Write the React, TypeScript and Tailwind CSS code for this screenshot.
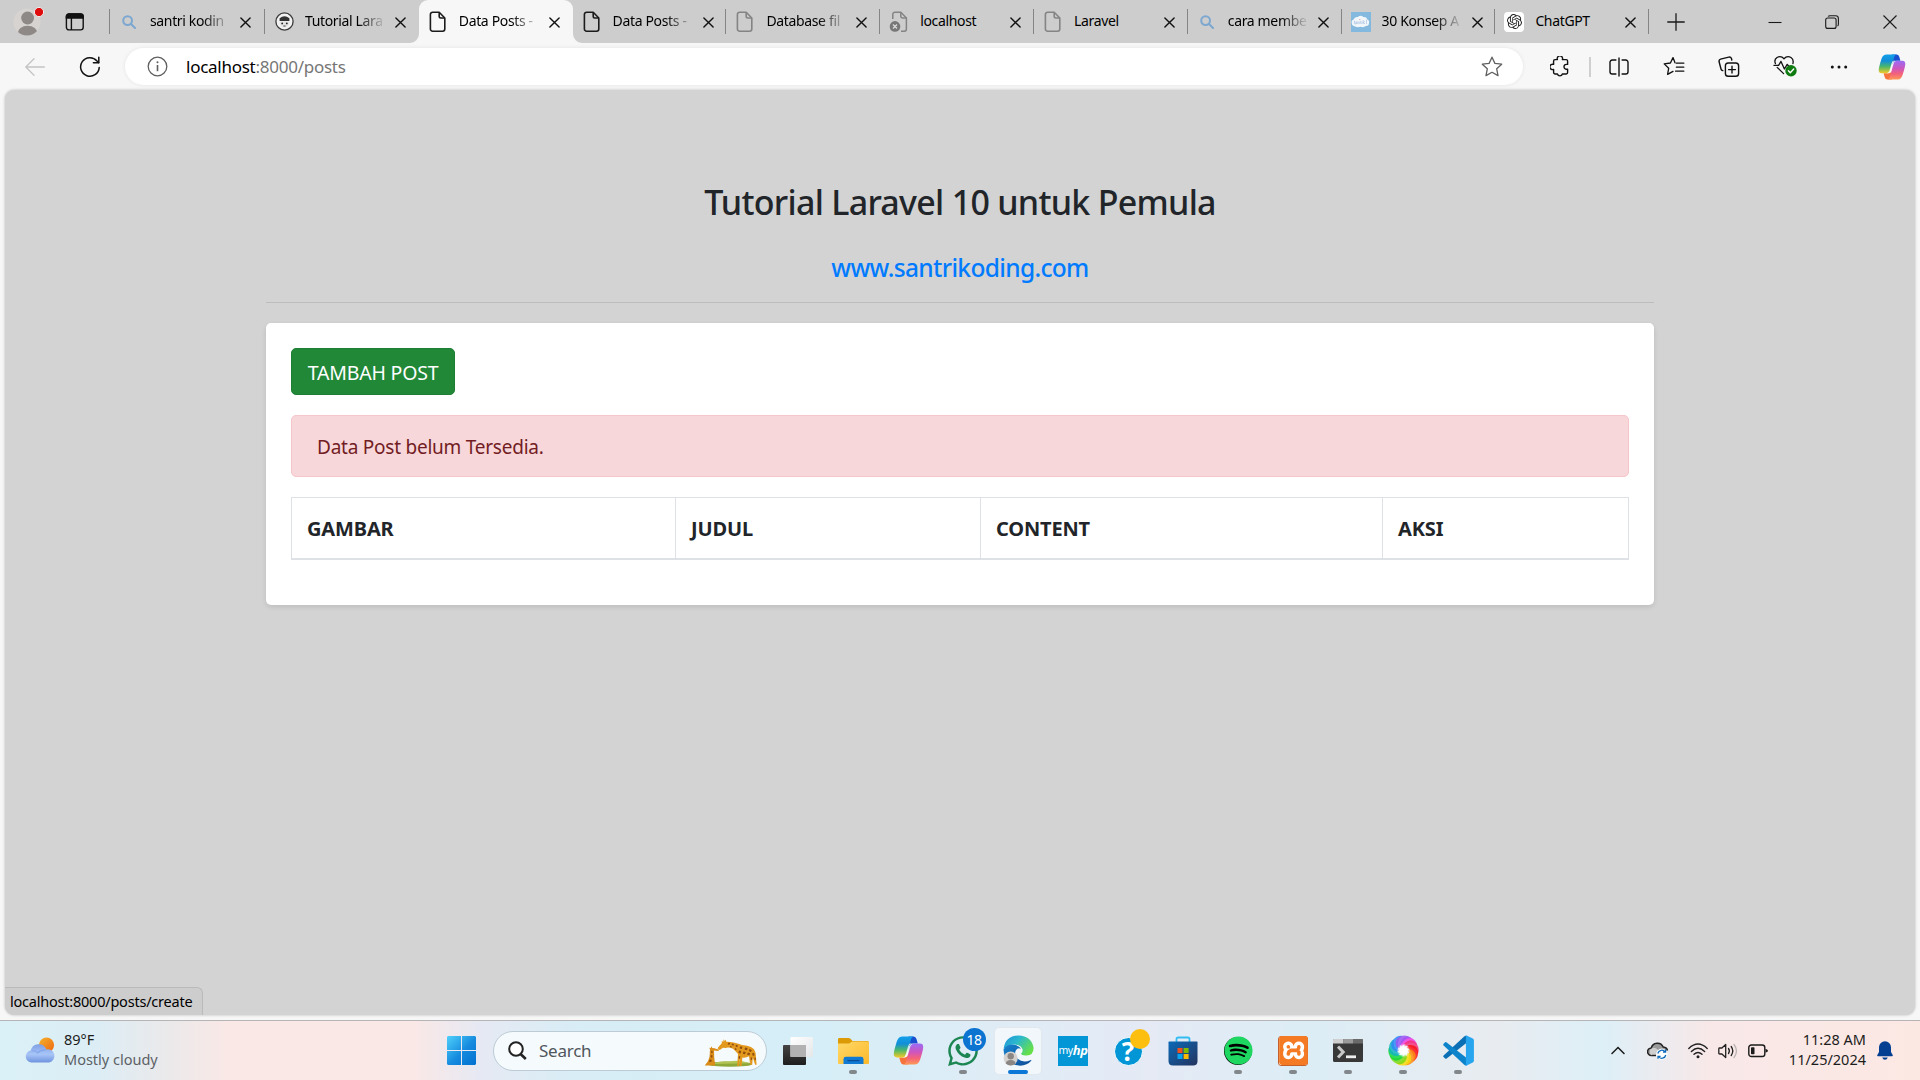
import type { ReactNode } from "react";
import { FaSpotify, FaWhatsapp } from "react-icons/fa";
import { SiOpenai, SiXampp } from "react-icons/si";

/* ---------- favicons ---------- */

const SearchFavicon = () => (
  <svg width="14" height="14" viewBox="0 0 14 14" fill="none" stroke="#7ba7d0" strokeWidth="2" strokeLinecap="round">
    <circle cx="5.6" cy="5.6" r="4.4" />
    <path d="M9 9l4 4" />
  </svg>
);

const PageFavicon = ({ color = "#1b1b1b" }: { color?: string }) => (
  <svg width="18" height="22" viewBox="0 0 18 22" fill="none" stroke={color} strokeWidth="1.6" strokeLinejoin="round">
    <path d="M3.6 1.2h6.6l5.6 5.8v11a2.2 2.2 0 0 1-2.2 2.2H3.6A2.2 2.2 0 0 1 1.4 18V3.4A2.2 2.2 0 0 1 3.6 1.2z" />
    <path d="M10.2 1.4v3.9a1.7 1.7 0 0 0 1.7 1.7h3.8" />
  </svg>
);

const BrokenPageFavicon = () => (
  <svg width="20" height="22" viewBox="0 0 20 22" fill="none" stroke="#848484" strokeWidth="1.5" strokeLinejoin="round">
    <path d="M3.8 8V3.4A2.2 2.2 0 0 1 6 1.2h5.8L17.4 7v11a2.2 2.2 0 0 1-2.2 2.2H12" />
    <path d="M11.8 1.4v3.9A1.7 1.7 0 0 0 13.5 7h3.8" />
    <circle cx="6" cy="15.4" r="5.3" fill="#777" stroke="none" />
    <path d="M4 13.4l4 4M8 13.4l-4 4" stroke="#d8d8d8" strokeWidth="1.4" />
  </svg>
);

const SantriFavicon = () => (
  <svg width="19" height="19" viewBox="0 0 19 19">
    <circle cx="9.5" cy="9.5" r="8.6" fill="#f2f2f2" stroke="#3a3a3a" strokeWidth="1.3" />
    <path d="M4.6 9V6.3Q9.5 2.4 14.4 6.3V9z" fill="#333" />
    <path d="M4.8 9.6h9.4v1.6q-.7 4-4.7 4.4-4-.4-4.7-4.4z" fill="#e3e3e3" />
    <circle cx="7.2" cy="11.4" r=".9" fill="#222" />
    <circle cx="11.8" cy="11.4" r=".9" fill="#222" />
    <path d="M8.4 14h2.2" stroke="#333" strokeWidth=".9" />
  </svg>
);

const TwinklFavicon = () => (
  <div className="flex size-5 items-center justify-center bg-[#83b9de]">
    <svg width="19" height="13" viewBox="0 0 19 13">
      <path d="M4 11.4Q.6 11 .8 8-.2 5.4 2.6 4.4 3.6 1.4 6.8 2 9.6-.4 12.4 2q3.4-.6 4 2.4 2.4 1.2 1.6 3.6 0 3-3 3-2.4 1.8-5.4.8-3 1-5.6-.4z" fill="#f1f6fa" />
      <path d="M3.4 5.600v3q.9.8 1.700-.2V6.600v1.800q.9.8 1.700-.1V6.500M8 6.500V9M9.200 9V6.800q1.200-.8 1.700.2v2M12.200 5v4m1.800-2.600-1.600 1.100L14 9m1.500-4.400V9" fill="none" stroke="#a9c3e2" strokeWidth=".7" />
      <path d="M8.400 4.600h.9" stroke="#e0889a" strokeWidth="1" />
    </svg>
  </div>
);

const OpenAiFavicon = () => (
  <div className="flex size-5 items-center justify-center rounded bg-white">
    <SiOpenai className="size-[15px] text-[#222]" />
  </div>
);

/* ---------- tab strip ---------- */

const CloseX = () => (
  <svg width="11" height="11" viewBox="0 0 11 11" stroke="#111" strokeWidth="1.4" strokeLinecap="round">
    <path d="M.9.9l9.2 9.2M10.1.9L.9 10.1" />
  </svg>
);

type TabInfo = { title: string; icon: ReactNode; active?: boolean; plainRight?: boolean; fade?: boolean };

const tabs: TabInfo[] = [
  { title: "santri kodin", icon: <SearchFavicon />, fade: true },
  { title: "Tutorial Lara", icon: <SantriFavicon />, plainRight: true, fade: true },
  { title: "Data Posts -", icon: <PageFavicon />, active: true, plainRight: true, fade: true },
  { title: "Data Posts -", icon: <PageFavicon />, fade: true },
  { title: "Database fil", icon: <PageFavicon color="#848484" />, fade: true },
  { title: "localhost", icon: <BrokenPageFavicon /> },
  { title: "Laravel", icon: <PageFavicon color="#848484" /> },
  { title: "cara membe", icon: <SearchFavicon />, fade: true },
  { title: "30 Konsep A", icon: <TwinklFavicon />, fade: true },
  { title: "ChatGPT", icon: <OpenAiFavicon /> },
];

const FootCurve = ({ flip = false }: { flip?: boolean }) => (
  <svg
    className={flip ? "absolute -right-[9px] bottom-0 -scale-x-100" : "absolute bottom-0 -left-[9px]"}
    width="9"
    height="9"
    viewBox="0 0 9 9"
  >
    <path d="M9 0v9H0a9 9 0 0 0 9-9z" fill="#f7f7f7" />
  </svg>
);

const Tab = ({ tab }: { tab: TabInfo }) => (
  <div
    className={
      tab.active
        ? "relative flex h-full w-[153.8px] shrink-0 items-center rounded-t-[9px] bg-[#f7f7f7]"
        : "relative flex h-full w-[153.8px] shrink-0 items-center first:w-[155px]"
    }
  >
    {tab.active && <FootCurve />}
    {tab.active && <FootCurve flip />}
    <div className="ml-[7px] flex w-6 shrink-0 items-center justify-center">{tab.icon}</div>
    <div
      className={
        tab.fade
          ? "mb-[2px] ml-[9px] w-[81px] shrink-0 mask-r-from-65% mask-r-to-100% text-[14px] leading-5 tracking-[-0.35px] whitespace-nowrap text-black"
          : "mb-[2px] ml-[9px] w-[81px] shrink-0 text-[14px] leading-5 tracking-[-0.35px] whitespace-nowrap text-black"
      }
    >
      {tab.title}
    </div>
    <div className="mt-[2px] ml-[9px] w-[11px] shrink-0">
      <CloseX />
    </div>
    {!tab.plainRight && <div className="ml-auto h-[25px] w-px bg-[#858585]" />}
  </div>
);

const TabStrip = () => (
  <div className="flex h-[43px] shrink-0 items-center bg-[#cdcdcd]">
    <svg className="ml-3 shrink-0" width="32" height="36" viewBox="0 0 32 36">
      <circle cx="15" cy="18" r="13.6" fill="#d6d3d0" />
      <clipPath id="avatarClip"><circle cx="15" cy="18" r="13.6" /></clipPath>
      <g clipPath="url(#avatarClip)" fill="#8e8986">
        <circle cx="15.6" cy="14" r="6.400" />
        <ellipse cx="15.6" cy="29.400" rx="10" ry="7.600" />
      </g>
      <circle cx="27" cy="8" r="4.600" fill="#e00b0b" stroke="#eee" strokeWidth="1" />
    </svg>
    <svg className="ml-[21px] shrink-0" width="20" height="18" viewBox="0 0 20 18" fill="none" stroke="#111" strokeWidth="1.4">
      <rect x="1.4" y=".9" width="16.8" height="16" rx="2.6" />
      <path d="M1.4 5V3.5A2.6 2.6 0 0 1 4 .9h11.6a2.6 2.6 0 0 1 2.6 2.6V5z" fill="#111" />
      <path d="M6.4 5v12" />
    </svg>
    <div className="ml-6 h-[25px] w-px shrink-0 bg-[#858585]" />
    <div className="flex h-full items-center">
      {tabs.map((t, i) => (
        <Tab key={i} tab={t} />
      ))}
    </div>
    <svg className="ml-[18px] shrink-0" width="18" height="18" viewBox="0 0 18 18" stroke="#1a1a1a" strokeWidth="1.3">
      <path d="M9 .3v17.4M.3 9h17.4" />
    </svg>
    <svg className="ml-[83px] shrink-0" width="14" height="14" viewBox="0 0 14 14" stroke="#1a1a1a" strokeWidth="1.1">
      <path d="M.5 7.5h13" />
    </svg>
    <svg className="ml-[43px] shrink-0" width="14" height="14" viewBox="0 0 14 14" fill="none" stroke="#1a1a1a" strokeWidth="1.1">
      <rect x=".7" y="3" width="10.4" height="10.4" rx="2" />
      <path d="M3.2 1.4Q3.6.7 5 .7h5.6a2.8 2.8 0 0 1 2.8 2.8v5.6q0 1.4-.8 2" />
    </svg>
    <svg className="ml-11 shrink-0" width="14" height="14" viewBox="0 0 14 14" stroke="#1a1a1a" strokeWidth="1.1">
      <path d="M.5.5l13 13M13.5.5l-13 13" />
    </svg>
  </div>
);

/* ---------- address bar ---------- */

const CopilotLogo = ({ id, size }: { id: string; size: number }) => (
  <svg className="shrink-0" width={size} height={size} viewBox="0 0 30 30">
    <defs>
      <linearGradient id={id + "a"} x1="0" y1="0" x2="0" y2="1">
        <stop offset="0" stopColor="#12a0ea" />
        <stop offset=".35" stopColor="#128ed8" />
        <stop offset=".65" stopColor="#4cb86a" />
        <stop offset="1" stopColor="#f5c927" />
      </linearGradient>
      <linearGradient id={id + "b"} x1="0" y1="0" x2="0" y2="1">
        <stop offset="0" stopColor="#9a6cf5" />
        <stop offset=".4" stopColor="#cc56c0" />
        <stop offset=".7" stopColor="#f4627a" />
        <stop offset="1" stopColor="#fd9a55" />
      </linearGradient>
    </defs>
    <path d="M15 1.5h5q2 0 2.8 2.6l1.2 4.2h-4.6q-2.8 0-3.6 2.8z" fill="#1a4fd0" />
    <path d="M15 28.5h-5q-2 0-2.8-2.6L6 21.7h4.6q2.8 0 3.6-2.8z" fill="#f6743c" />
    <path d="M8.8 1.5H20q-1.9.3-2.6 2.8l-4 14q-1 3.4-4.4 3.4H4q-3.7 0-3.2-4.2.4-2.9 2.3-9.2.9-3.2 2-4.8 1.4-2 3.7-2z" fill={`url(#${id}a)`} />
    <path d="M21.2 28.5H10q1.9-.3 2.6-2.8l4-14q1-3.4 4.4-3.4h5q3.7 0 3.2 4.2-.4 2.9-2.3 9.2-.9 3.2-2 4.8-1.4 2-3.7 2z" fill={`url(#${id}b)`} />
    <path d="M15.4 11.2q.8-2.9 3.6-2.9h-2.8q-1.200 1.200-1.700 3l-2.300 7.800q-.7 2.600-3 2.600h2.300q2.200 0 2.800-2.400z" fill="#fff" fillOpacity=".85" />
  </svg>
);

const AddressBar = () => (
  <div className="flex h-[47px] shrink-0 items-center bg-[#f7f7f7]">
    <svg className="ml-[25px] shrink-0" width="20" height="18" viewBox="0 0 20 18" fill="none" stroke="#c4c4c4" strokeWidth="1.3" strokeLinecap="round" strokeLinejoin="round">
      <path d="M19.4 9H.8M9 .8L.8 9 9 17.2" />
    </svg>
    <svg className="ml-[34px] shrink-0" width="22" height="22" viewBox="0 0 22 22" fill="none" stroke="#111" strokeWidth="1.5" strokeLinecap="round" strokeLinejoin="round">
      <path d="M20.2 11.6A9.3 9.3 0 1 1 18 4.9l1.6 1.7" />
      <path d="M19.8 1.2v5.5h-5.4" />
    </svg>
    <div className="ml-6 flex h-[37px] w-[1398px] shrink-0 items-center rounded-full bg-white shadow-[0_0_4px_rgba(0,0,0,0.08)]">
      <svg className="ml-[22px] shrink-0" width="21" height="21" viewBox="0 0 21 21" fill="none" stroke="#5f5f5f" strokeWidth="1.3">
        <circle cx="10.5" cy="10.5" r="9.3" />
        <path d="M10.5 9v6.2" strokeWidth="1.6" />
        <circle cx="10.5" cy="6.2" r="1" fill="#5f5f5f" stroke="none" />
      </svg>
      <div className="ml-[18px] text-[17px] leading-6 tracking-[-0.26px] text-[#767676]">
        <span className="text-black">localhost</span>:8000/posts
      </div>
      <svg className="mr-5 ml-auto shrink-0" width="22" height="21" viewBox="0 0 22 21" fill="none" stroke="#606060" strokeWidth="1.3" strokeLinejoin="round">
        <path d="M11 1.2l2.9 6.2 6.8.8-5 4.6 1.3 6.8-6-3.3-6 3.3 1.3-6.8-5-4.6 6.8-.8z" />
      </svg>
    </div>
    <svg className="ml-[27px] shrink-0" width="19" height="21" viewBox="0 0 19 21" fill="none" stroke="#111" strokeWidth="1.4" strokeLinejoin="round">
      <path d="M5 3.6h2.4a2.7 2.7 0 1 1 5 0h3.8a1.4 1.4 0 0 1 1.4 1.4v3.4h-1.2a2.4 2.4 0 0 0 0 4.8h1.2v3.4a1.4 1.4 0 0 1-1.4 1.4h-3.8a2.6 2.6 0 0 1-5 0H5a1.4 1.4 0 0 1-1.4-1.4v-3.2a2.7 2.7 0 1 1 0-5V5A1.4 1.4 0 0 1 5 3.6z" />
    </svg>
    <div className="ml-5 h-5 w-[1.5px] shrink-0 bg-[#cfcfcf]" />
    <svg className="ml-[18px] shrink-0" width="20" height="20" viewBox="0 0 20 20" fill="none" stroke="#111" strokeWidth="1.4">
      <path d="M7.4 3H3.2A2.2 2.2 0 0 0 1 5.200v9.600A2.200 2.200 0 0 0 3.200 17H7.400M12.600 3h4.200A2.200 2.200 0 0 1 19 5.200v9.600a2.200 2.200 0 0 1-2.200 2.200h-4.200M10 .4v19.200" />
    </svg>
    <svg className="ml-[34.500px] shrink-0" width="22" height="21" viewBox="0 0 22 21" fill="none" stroke="#111" strokeWidth="1.3" strokeLinejoin="round" strokeLinecap="round">
      <path d="M12 6.800L10 1.600 7.400 7 1.200 7.900l4.500 4.300-1.100 6.200 5.400-3M13.400 7.200h7.400M13.400 11.200h7.400M12.600 15.200h8.200" />
    </svg>
    <svg className="ml-[33px] shrink-0" width="22" height="21" viewBox="0 0 22 21" fill="none" stroke="#111" strokeWidth="1.4" strokeLinejoin="round" strokeLinecap="round">
      <rect x="7.400" y="7" width="13.200" height="13.200" rx="2.800" />
      <path d="M14 10.200v6.800M10.600 13.600h6.800" />
      <path d="M4.800 14.600q-1.400-.2-1.800-1.600L1.100 5.800q-.4-2 1.500-2.700l8.200-2q2-.3 2.700 1.500l.3 1.400" />
    </svg>
    <svg className="ml-[33px] shrink-0" width="25" height="23" viewBox="0 0 25 23" fill="none" stroke="#111" strokeWidth="1.3" strokeLinejoin="round" strokeLinecap="round">
      <path d="M2.400 8.600Q.8 4.600 4 2.500q4-2.100 7 1.200 3-3.300 7-1.200 3 2.100 1.900 6M4.200 12.400l6.400 6.200" />
      <path d="M1 10.400h4.600l2.400-4 3.400 7.600 2.800-4.600 1.400 1.600" />
      <circle cx="18" cy="15.700" r="5.700" fill="#0f7b10" stroke="none" />
      <path d="M15.400 15.800l1.900 1.900 3.400-3.700" stroke="#fff" strokeWidth="1.4" />
    </svg>
    <svg className="ml-8 shrink-0" width="18" height="4" viewBox="0 0 18 4" fill="#111">
      <circle cx="2.300" cy="2" r="1.500" />
      <circle cx="9" cy="2" r="1.500" />
      <circle cx="15.700" cy="2" r="1.500" />
    </svg>
    <div className="ml-[30px]">
      <CopilotLogo id="cpBar" size={28} />
    </div>
  </div>
);

/* ---------- page ---------- */

const PostsPage = () => (
  <main className="relative mx-[5px] flex h-[925px] shrink-0 flex-col items-center rounded-[9px] bg-[#d3d3d3] shadow-[0_0_3px_rgba(0,0,0,0.25)]">
    <h3 className="mt-[91px] text-[34px] leading-[42px] font-medium tracking-[-0.72px] text-[#212529]">
      Tutorial Laravel 10 untuk Pemula
    </h3>
    <h5 className="mt-[30px] text-[24.5px] leading-[30px] font-medium tracking-[-0.66px] text-[#007bff]">
      www.santrikoding.com
    </h5>
    <div className="mt-[19px] h-px w-[1388px] bg-[#bdbdbd]" />
    <section className="mt-5 h-[282px] w-[1388px] rounded-[5px] bg-white px-[25px] pt-[25px] shadow-[0_2px_5px_rgba(0,0,0,0.1)]">
      <button className="flex h-[47px] w-[164px] items-center justify-center rounded-[5px] border border-[#1e7e34] bg-[#218838] pt-[2px] text-[19.5px] leading-[30px] tracking-[-0.2px] text-white">
        TAMBAH POST
      </button>
      <div className="mt-5 flex h-[62px] items-center rounded-[5px] border border-[#f5c6cb] bg-[#f8d7da] pt-[2px] pl-[25px] text-[19px] leading-[30px] tracking-[-0.24px] text-[#721c24]">
        Data Post belum Tersedia.
      </div>
      <div className="mt-5 flex h-[63px] border border-b-2 border-[#dee2e6] text-[20px] leading-[30px] font-bold tracking-[-0.15px] text-[#212529]">
        <div className="flex w-[384px] items-center border-r border-[#dee2e6] pt-0.5 pl-[15px]">GAMBAR</div>
        <div className="flex w-[305px] items-center border-r border-[#dee2e6] pt-0.5 pl-[15px]">JUDUL</div>
        <div className="flex w-[402px] items-center border-r border-[#dee2e6] pt-0.5 pl-[15px]">CONTENT</div>
        <div className="flex items-center pt-0.5 pl-[15px]">AKSI</div>
      </div>
    </section>
    <div className="absolute bottom-0 left-0 flex h-7 w-[198px] items-center rounded-tr-[6px] rounded-bl-[9px] border-t border-r border-[#bababa] bg-[#cdcdcd] pb-px pl-[5px] text-[14.5px] leading-5 tracking-[-0.22px] whitespace-nowrap text-black">
      localhost:8000/posts/create
    </div>
  </main>
);

/* ---------- taskbar ---------- */

const Slot = ({ children, running }: { children: ReactNode; running?: boolean }) => (
  <div className="relative flex h-[59px] w-[55px] shrink-0 items-center justify-center">
    {children}
    {running && <div className="absolute bottom-[6px] h-1 w-2 rounded-full bg-[#82878b]" />}
  </div>
);

const WeatherIcon = () => (
  <svg className="shrink-0" width="31" height="27" viewBox="0 0 31 27">
    <defs>
      <linearGradient id="sun" x1="0" y1="0" x2="1" y2="1">
        <stop offset="0" stopColor="#f6b42c" />
        <stop offset="1" stopColor="#ee6410" />
      </linearGradient>
      <linearGradient id="cloud" x1="0" y1="0" x2="0" y2="1">
        <stop offset="0" stopColor="#7f9fe4" />
        <stop offset=".55" stopColor="#a8c5f7" />
        <stop offset="1" stopColor="#6f93df" />
      </linearGradient>
    </defs>
    <circle cx="21.5" cy="8" r="7.6" fill="url(#sun)" />
    <path d="M6.500 25.500a6 6 0 0 1-.8-11.900 8.200 8.200 0 0 1 15.600-1.200 6.700 6.700 0 0 1 2.900 13.100z" fill="url(#cloud)" />
    <path d="M6.600 14q3.600-1 6 2 3-3 8-3.300" fill="none" stroke="#7b9fe8" strokeWidth="1.2" opacity=".7" />
  </svg>
);

const Giraffes = () => (
  <svg className="shrink-0" width="54" height="29" viewBox="0 0 54 29">
    <ellipse cx="26" cy="26.200" rx="22" ry="2.600" fill="#8fa83a" />
    <path d="M8 26q8-4 18-2.400 8-2.200 20 1.600z" fill="#b3c455" />
    <path d="M.8 27.600Q5 23 5.600 18.500l.4-7.300-.8-1.500 1.600.2.600-1.600.8 1.700 2.200.2 4.400 1.600q.4 1-.8 1.300l-4-.5.2 6.600 1 8.400z" fill="#d98c18" />
    <path d="M13.600 11.200l.4-1.800 3.800-4.200L17.800 3l1.500.7.3-2.400 1.200 1.600 1.100-1.200.4 2q9 .1 15.700 3.400 8 .4 12 4.200 2.200 3.200 2 8.500l.6 7h-1.500l-2.300-7.400-.6 7.400h-2l-1.200-8.600q-3.800 2-6.600 1.200L37.600 28h-1.500l-.7-7.400-.2 7.400h-2l.8-12q-2.400-2.800-5-5.200-4-2-7.600-.9l-2.400-.1-3.200 2.200z" fill="#e3991e" />
    <path d="M24 4.700l2.200.3-.6 1.700-1.800-.3zM28 5.500l2 .6-.6 1.700-1.800-.8zM32 6.700l2 .8-.8 1.800-1.800-1zM36 8.400l2.400.3-.5 2.200-2.200-.3zM41 9.600l2.600.4-.6 2.300-2.400-.6zM45.400 11l2.400.9-.8 2-2.300-.8zM26 8l1.800.4-.3 1.300-1.600-.7zM31 10l1.600.8-.4 1.500-1.400-.9zM35 12.400l2.200.6-.5 2.400-2.200-.4zM39.400 13.400l2.400.7-.8 2.200-2.200-.6zM43.800 14.400l2.400.9-.7 2-2.400-.5zM48.400 14.800l2 .8-.2 2.400-1.900-.7zM34.800 18l1.500.2-.3 2.500-1.400-.2zM46.600 19.400l1.600.2-.1 2.300-1.300-.2zM50.300 19.600l1.400.2.100 2.300h-1.100zM7.200 12.800l1.400.5v1.700l-1.500-.2zM6.800 17l1.700.5-.2 2.200-1.800-.4zM5.600 21.500l2.200.3-.5 2.300-2.300-.4z" fill="#8f4d10" />
  </svg>
);

const StartIcon = () => (
  <svg className="shrink-0" width="29" height="29" viewBox="0 0 29 29">
    <defs>
      <linearGradient id="win" x1="0" y1="0" x2="1" y2="1">
        <stop offset="0" stopColor="#4fd0fb" />
        <stop offset=".55" stopColor="#158ade" />
        <stop offset="1" stopColor="#0270d0" />
      </linearGradient>
    </defs>
    <path d="M1 0h13v14H0V1zM15 0h13l1 1v13H15zM0 15h14v14H1l-1-1zM15 15h14v13l-1 1H15z" fill="url(#win)" />
  </svg>
);

const TaskViewIcon = () => (
  <svg className="shrink-0" width="30" height="28" viewBox="0 0 30 28">
    <defs>
      <linearGradient id="tv" x1="0" y1="0" x2="0" y2="1">
        <stop offset="0" stopColor="#444" />
        <stop offset="1" stopColor="#1e1e1e" />
      </linearGradient>
      <linearGradient id="tvPane" x1="0" y1="0" x2="1" y2="1">
        <stop offset="0" stopColor="#ffffff" />
        <stop offset="1" stopColor="#e4e6e8" />
      </linearGradient>
    </defs>
    <rect x="0" y="8" width="23" height="20" rx="1" fill="url(#tv)" />
    <rect x="7.500" y="0" width="22.500" height="20" rx="1" fill="url(#tvPane)" />
    <path d="M7.500 8H23v12H7.500z" fill="#b2b2b2" />
  </svg>
);

const ExplorerIcon = () => (
  <svg width="31" height="28" viewBox="0 0 31 28">
    <defs>
      <linearGradient id="fold" x1="0" y1="0" x2="1" y2="1">
        <stop offset="0" stopColor="#ffd968" />
        <stop offset="1" stopColor="#fdb92a" />
      </linearGradient>
    </defs>
    <path d="M0 6V2.200Q0 .9 1.400.9h9.200q1 0 1.800.8l2.200 2.200h14.800Q31 3.900 31 5.500V12H0z" fill="#dd9a07" />
    <path d="M0 6.500h10.500q1 0 1.800-.7l1.600-1.400h15.500Q31 4.400 31 6v19.800q0 1.200-1.200 1.200H1.200Q0 27 0 25.800z" fill="url(#fold)" />
    <path d="M5.500 27v-4.800q0-2.400 2.400-2.400h15.200q2.400 0 2.400 2.400V27z" fill="#117bd4" />
    <path d="M9.500 23.600h12" stroke="#0a4f9a" strokeWidth="1.4" />
  </svg>
);

const EdgeIcon = () => (
  <svg width="31" height="31" viewBox="0 0 31 31">
    <defs>
      <linearGradient id="eg1" x1="0" y1="0" x2="1" y2=".6">
        <stop offset="0" stopColor="#1d8fd8" />
        <stop offset=".45" stopColor="#2bb8cf" />
        <stop offset="1" stopColor="#66e049" />
      </linearGradient>
      <linearGradient id="eg2" x1="0" y1="0" x2="1" y2="1">
        <stop offset="0" stopColor="#1683cf" />
        <stop offset="1" stopColor="#0f4c96" />
      </linearGradient>
    </defs>
    <path d="M.6 14Q2 1 15.500.5 28.500 1 30.500 12.500q.5 7.500-7 8-5.500.2-5.400-2 2-1.800 1.400-4.200-1-3.800-6.500-4.600Q5.500 9 .6 14z" fill="url(#eg1)" />
    <path d="M.5 14.500Q4 8.500 11.500 9.800q5 1 6.500 4-3.500-1.400-5.200 1.600-2.200 4.400 2.200 8.700 5 4.200 13 .8.700 0 .2.900Q24 31 16 30.600 1.500 29 .5 14.500z" fill="url(#eg2)" />
    <circle cx="7.700" cy="23.500" r="7" fill="#d4d1cf" />
    <circle cx="7.700" cy="21.200" r="3.200" fill="#8b8683" />
    <path d="M2.800 28.500q.4-3.300 4.900-3.400 4.500.1 4.900 3.400-2 2-4.900 2t-4.900-2z" fill="#8b8683" />
  </svg>
);

const StoreIcon = () => (
  <svg width="30" height="30" viewBox="0 0 30 30">
    <defs>
      <linearGradient id="st" x1="0" y1="0" x2="1" y2="1">
        <stop offset="0" stopColor="#0c6ab8" />
        <stop offset="1" stopColor="#24335e" />
      </linearGradient>
    </defs>
    <path d="M8.500 6V3.200q0-1.700 1.700-1.700h9.600q1.700 0 1.700 1.700V6" fill="none" stroke="#31bdf2" strokeWidth="1.8" />
    <path d="M1 5.500h28q.5 0 .5.700V25q0 4.500-4.500 4.500H5Q.5 29.500.5 25V6.200q0-.7.500-.7z" fill="url(#st)" />
    <path d="M9.500 12h5v5h-5z" fill="#f2511f" />
    <path d="M15.600 12h5v5h-5z" fill="#7fba00" />
    <path d="M9.500 18h5v5h-5z" fill="#08a4ef" />
    <path d="M15.600 18h5v5h-5z" fill="#ffb902" />
  </svg>
);

const TerminalIcon = () => (
  <svg width="30" height="24" viewBox="0 0 30 24">
    <rect width="30" height="23" rx="1.500" fill="#383838" />
    <path d="M1 0h9.500v4.500H0V1q0-1 1-1z" fill="#d0d0d0" />
    <path d="M10.500 0H20v4.500h-9.500z" fill="#9a9a9a" />
    <path d="M20 0h9q1 0 1 1v3.500H20z" fill="#6a6a6a" />
    <path d="M5 7.600l5.200 5.400L5 18.600" fill="none" stroke="#c8c8c8" strokeWidth="3" />
    <path d="M13 17.800h10" stroke="#eee" strokeWidth="2.8" />
  </svg>
);

const swirlColors = ["#f23be0", "#f5317a", "#fb1414", "#ff8c12", "#f8d90c", "#7bd916", "#12d83c", "#10b3c2", "#2d8af5", "#9a58f2"];

const SwirlIcon = () => (
  <svg width="31" height="31" viewBox="0 0 31 31">
    <defs>
      <radialGradient id="sw">
        <stop offset="0" stopColor="#fff" />
        <stop offset=".5" stopColor="#fff" />
        <stop offset="1" stopColor="#fff" stopOpacity="0" />
      </radialGradient>
    </defs>
    {swirlColors.map((c, i) => (
      <path key={c} d="M12 9Q14 0 22 2.200q6.500 2.600 7 8-4-3.800-10.200-1.600Q14 10 14 12z" fill={c} fillOpacity=".85" transform={`rotate(${i * 36} 15.5 15.5)`} />
    ))}
    <circle cx="15.500" cy="15.500" r="6.800" fill="url(#sw)" />
  </svg>
);

const VsCodeIcon = () => (
  <svg width="31" height="31" viewBox="0 0 31 31">
    <path d="M.6 20.400q-.8.900 0 1.700l1.500 1.400q.8.500 1.600-.1L24 7.600V1q-1.600-.6-2.800.5z" fill="#0b6fb5" />
    <path d="M.6 10.400q-.8-.9 0-1.700l1.500-1.400q.8-.5 1.600.1L24 23.200v7q-1.600.6-2.800-.5z" fill="#0d83cc" />
    <path d="M22.300.7q.8-.5 1.800 0l5.700 2.700q1.100.6 1.100 1.800v20.600q0 1.200-1.100 1.800l-5.700 2.700q-1 .5-1.800 0 .6-.3.600-1.300V2q0-1-.6-1.300z" fill="#27a5ef" />
  </svg>
);

const Taskbar = () => (
  <footer className="flex h-[60px] shrink-0 items-center border-t border-[#b5b5b8] bg-[linear-gradient(90deg,#daf1f7_0%,#dcedf5_5%,#ece9ea_9%,#fae8e6_12%,#fae8e6_21.5%,#e6e9f3_25%,#d8edf6_30%,#d5eef7_42%,#dfecf6_52%,#e5eaf5_60%,#dcedf6_68%,#e8ecf0_78%,#ddeff7_83.5%,#f8e8e8_89%,#fce8e3_100%)]">
    <div className="flex w-[447px] shrink-0 items-center pl-[25px]">
      <WeatherIcon />
      <div className="mb-1 ml-2 text-[14.5px] leading-5">
        <div className="text-[#1c1c1c]">89°F</div>
        <div className="text-[#5d6166]">Mostly cloudy</div>
      </div>
    </div>
    <StartIcon />
    <div className="ml-[17px] flex h-10 w-[274px] shrink-0 items-center rounded-full border border-[#bccbd5] bg-[#f5fafd]">
      <svg className="ml-[14px]" width="19" height="19" viewBox="0 0 19 19" fill="none" stroke="#222" strokeWidth="2">
        <circle cx="8" cy="8" r="6.8" fill="#fff" />
        <path d="M12.800 13.200l5 4.800" strokeWidth="2.6" />
      </svg>
      <span className="ml-3 text-[17px] leading-6 tracking-[-0.25px] text-[#50565b]">Search</span>
      <div className="mt-1 mr-2 ml-auto">
        <Giraffes />
      </div>
    </div>
    <div className="ml-4 flex shrink-0 items-center">
      <TaskViewIcon />
    </div>
    <div className="ml-[12.5px] flex shrink-0 items-center">
      <Slot running><ExplorerIcon /></Slot>
      <Slot><CopilotLogo id="cpTask" size={31} /></Slot>
      <Slot running>
        <FaWhatsapp className="size-[34px] text-[#1c8653]" />
        <div className="absolute top-[7px] left-[27px] flex size-[23px] items-center justify-center rounded-full bg-[#0b74d1] text-[14px] leading-none tracking-[-0.5px] text-white">18</div>
      </Slot>
      <div className="relative flex h-[59px] w-[55px] shrink-0 items-center justify-center">
        <div className="flex size-12 items-center justify-center rounded-[5px] border border-[#e2e9ee] bg-[#f1f7fb]">
          <EdgeIcon />
        </div>
        <div className="absolute bottom-[6px] h-1 w-5 rounded-full bg-[#0c77d6]" />
      </div>
      <Slot>
        <div className="flex size-[30px] items-center justify-center bg-[#0396d6] text-[10.5px] leading-none tracking-[-0.4px] text-white">
          my<span className="text-[13px] font-bold italic">hp</span>
        </div>
      </Slot>
      <Slot>
        <div className="mt-px flex size-[29px] items-center justify-center rounded-full border-[1.5px] border-white bg-[#0396d6] text-[26px] leading-none font-bold text-white">?</div>
        <div className="absolute top-2 left-[29px] size-5 rounded-full bg-[#fdbf0f]" />
      </Slot>
      <Slot><StoreIcon /></Slot>
      <Slot running>
        <div className="flex size-[28px] items-center justify-center rounded-full bg-black">
          <FaSpotify className="size-[29px] shrink-0 text-[#1ed760]" />
        </div>
      </Slot>
      <Slot running>
        <div className="flex size-[30px] items-center justify-center rounded-[3px] border border-[#c4612a] bg-white">
          <SiXampp className="size-[29px] shrink-0 text-[#f47a24]" />
        </div>
      </Slot>
      <Slot running><TerminalIcon /></Slot>
      <Slot running><SwirlIcon /></Slot>
      <Slot running><VsCodeIcon /></Slot>
    </div>
    <div className="ml-auto flex items-center pr-[27px]">
      <svg width="14" height="9" viewBox="0 0 14 9" fill="none" stroke="#1b1b1b" strokeWidth="1.5" strokeLinecap="round">
        <path d="M1 7.500l6-6 6 6" />
      </svg>
      <svg className="ml-[22px]" width="22" height="18" viewBox="0 0 22 18" fill="none">
        <path d="M5 13.500H4.500A3.800 3.800 0 0 1 4.300 5.900 6.300 6.300 0 0 1 16.200 5Q20 5.500 20.500 8.500" fill="#9a9a9a" stroke="#222" strokeWidth="1.5" />
        <path d="M5 13.500A4 4 0 0 1 5.500 6q3-.8 5.500 2l-1 5.500z" fill="#cfcfcf" />
        <path d="M5 13.500H9" stroke="#222" strokeWidth="1.5" />
        <circle cx="14.800" cy="12.200" r="5.600" fill="#fff" />
        <path d="M10.800 11.500a4.100 4.100 0 0 1 7.400-1.500M18.800 13a4.100 4.100 0 0 1-7.400 1.500M18.600 7.600v2.600H16M11 16.800v-2.500h2.600" stroke="#0f6cbd" strokeWidth="1.3" />
      </svg>
      <svg className="ml-[19px]" width="20" height="16" viewBox="0 0 20 16" fill="none" stroke="#222" strokeWidth="1.4" strokeLinecap="round">
        <path d="M.8 5.500q9.200-8.800 18.400 0M3.400 8.500q6.600-6.400 13.200 0M6 11.300q4-3.800 8 0" />
        <circle cx="10" cy="13.800" r="1.500" fill="#222" stroke="none" />
      </svg>
      <svg className="ml-2.5" width="20" height="16" viewBox="0 0 20 16" fill="none" stroke="#222" strokeWidth="1.3" strokeLinecap="round" strokeLinejoin="round">
        <path d="M7.700 1.500v13L3.900 11H1.700Q.8 11 .8 10.200V5.800Q.8 5 1.700 5h2.200z" />
        <path d="M10.500 5.500q1.800 2.500 0 5M13.200 3.500q3.200 4.500 0 9" />
        <path d="M16 1.500q5 6.500 0 13" stroke="#b9b3b3" />
      </svg>
      <svg className="ml-2.5" width="20" height="14" viewBox="0 0 20 14" fill="none" stroke="#1b1b1b" strokeWidth="1.4">
        <rect x=".8" y="1" width="16" height="11.500" rx="2.600" />
        <rect x="3" y="3.200" width="3.500" height="7.100" rx=".8" fill="#1b1b1b" stroke="none" />
        <path d="M17.500 4.800l2.300 1.100v1.700l-2.300 1.100z" fill="#1b1b1b" stroke="none" />
      </svg>
      <div className="mb-1 ml-[21px] text-right text-[14.5px] leading-5 text-[#1c1c1c]">
        <div>11:28 AM</div>
        <div>11/25/2024</div>
      </div>
      <svg className="ml-[11px]" width="16" height="19" viewBox="0 0 16 19" fill="#043f92">
        <path d="M8 .3a6 6 0 0 1 6 6V11l1.800 3.300q.2 1-.8 1H1q-1 0-.8-1L2 11V6.300a6 6 0 0 1 6-6zM5.200 16.400h5.600q-.8 2.400-2.800 2.400t-2.800-2.400z" />
      </svg>
    </div>
  </footer>
);

export default function App() {
  return (
    <div className="flex h-[1080px] w-[1920px] flex-col overflow-hidden bg-[#f7f7f7] font-['Noto_Sans',sans-serif]">
      <TabStrip />
      <AddressBar />
      <PostsPage />
      <div className="h-[5px] shrink-0" />
      <Taskbar />
    </div>
  );
}
